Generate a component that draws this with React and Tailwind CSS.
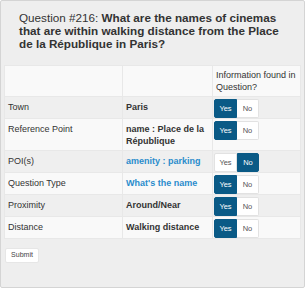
import React, { useState } from 'react';

// Rows of the query analysis table
const ROWS = [
    { label: 'Town', value: 'Paris', found: true },
    { label: 'Reference Point', value: 'name : Place de la République', found: true },
    { label: 'POI(s)', value: 'amenity : parking', found: false, link: true },
    { label: 'Question Type', value: "What's the name", found: true, link: true },
    { label: 'Proximity', value: 'Around/Near', found: true },
    { label: 'Distance', value: 'Walking distance', found: true },
];

const Toggle = ({ value, onChange }) => (
    <div className="flex h-[19px] w-[45px] text-[7.5px]">
        <button
            onClick={() => onChange(true)}
            className={`w-[23px] rounded-l-[2px] border ${value ? 'bg-[#0a5a86] border-[#0a5a86] text-white' : 'bg-white border-[#e2e2e2] text-[#555]'}`}
        >
            Yes
        </button>
        <button
            onClick={() => onChange(false)}
            className={`w-[22px] rounded-r-[2px] border ${!value ? 'bg-[#0a5a86] border-[#0a5a86] text-white' : 'bg-white border-[#e2e2e2] border-l-0 text-[#555]'}`}
        >
            No
        </button>
    </div>
);

export default function App() {
    const [found, setFound] = useState(ROWS.map(r => r.found));

    return (
        <div className="w-[305px] h-[288px] bg-[#eeeeee] border border-[#d4d4d4] rounded-[2px] px-[3px] font-['Liberation_Sans',Arial,sans-serif] text-[#333]">
            <h2 className="pl-[15px] pr-[8px] pt-[10px] pb-[15px] text-[11.7px] leading-[13px]">
                Question #216: <span className="font-bold">What are the names of cinemas that are within walking distance from the Place de la République in Paris?</span>
            </h2>

            <table className="w-[297px] border-collapse text-[9px] leading-[12px]">
                <thead>
                    <tr className="bg-[#f9f9f9]">
                        <th className="w-[118px] border border-[#e8e8e8]"></th>
                        <th className="w-[90px] border border-[#e8e8e8]"></th>
                        <th className="px-[3px] py-[3px] text-left font-normal align-top border border-[#e8e8e8]">
                            Information found in Question?
                        </th>
                    </tr>
                </thead>
                <tbody>
                    {ROWS.map((row, idx) => (
                        <tr key={row.label} className={idx % 2 === 0 ? 'bg-[#efefef]' : 'bg-[#f9f9f9]'}>
                            <td className="px-[3px] py-[4px] align-top border border-[#e8e8e8]">{row.label}</td>
                            <td className={`px-[3px] pt-[4px] pb-[3px] align-top font-bold border border-[#e8e8e8] ${row.link ? 'text-[#2a8ccc]' : ''}`}>
                                {row.value}
                            </td>
                            <td className="px-[1px] pt-[2px] pb-0 align-top border border-[#e8e8e8]">
                                <Toggle
                                    value={found[idx]}
                                    onChange={v => setFound(f => f.map((x, i) => (i === idx ? v : x)))}
                                />
                            </td>
                        </tr>
                    ))}
                </tbody>
            </table>

            <button className="mt-[9px] ml-[1px] h-[15px] w-[34px] bg-white border border-[#e6e6e6] rounded-[2px] text-[7px] text-[#444]">
                Submit
            </button>
        </div>
    );
}
